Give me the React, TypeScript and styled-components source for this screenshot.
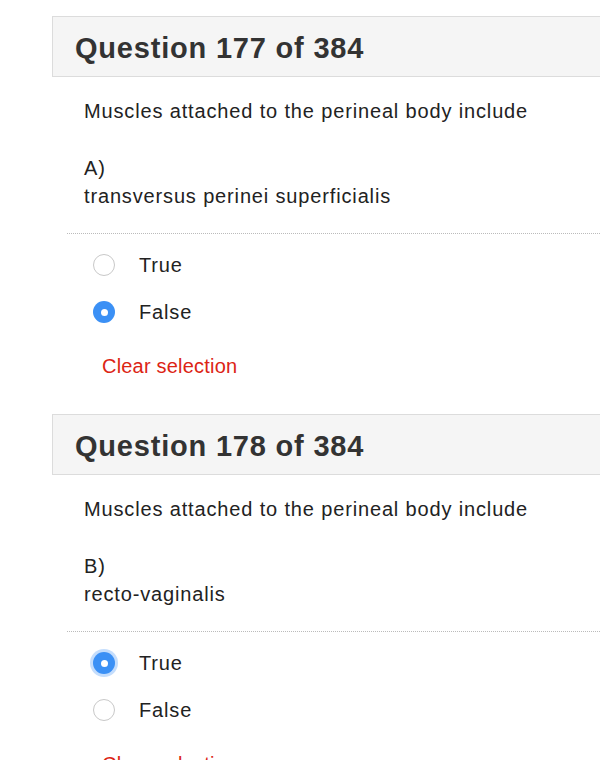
import React from "react";
import styled, { createGlobalStyle } from "styled-components";

const Global = createGlobalStyle`
  html, body { margin: 0; padding: 0; background: #fff; }
  body { font-family: "Liberation Sans", Arial, sans-serif; color: #333; overflow: hidden; }
`;

const Page = styled.div`
  width: 600px;
  height: 760px;
  overflow: hidden;
  padding: 16px 0 0 52px;
  box-sizing: border-box;
`;

const Question = styled.section`
  display: flex;
  flex-direction: column;
  margin-bottom: 36px;
`;

const Header = styled.div`
  width: 600px;
  height: 61px;
  box-sizing: border-box;
  border: 1px solid #dcdcdc;
  background: #f5f5f5;
  display: flex;
  align-items: center;
  padding: 3px 0 0 22px;
`;

const Title = styled.h2`
  margin: 0;
  font-size: 29px;
  font-weight: bold;
  letter-spacing: 0.8px;
  color: #333;
`;

const Body = styled.div`
  padding: 20px 0 0 0;
`;

const Text = styled.p`
  margin: 0 0 0 32px;
  font-size: 20px;
  letter-spacing: 0.85px;
  line-height: 28px;
  color: #222;
`;

const Stem = styled(Text)`
  margin-bottom: 29px;
`;

const Divider = styled.div`
  margin: 23px 0 0 15px;
  border-top: 1px dotted #bbb;
`;

const Options = styled.div`
  display: flex;
  flex-direction: column;
  gap: 25px;
  padding: 20px 0 0 41px;
`;

const Option = styled.label`
  display: flex;
  align-items: center;
  gap: 24px;
  font-size: 20px;
  letter-spacing: 0.85px;
  color: #222;
  height: 22px;
`;

const Radio = styled.span<{ $checked?: boolean; $focus?: boolean }>`
  width: 22px;
  height: 22px;
  box-sizing: border-box;
  border-radius: 50%;
  flex: none;
  display: flex;
  align-items: center;
  justify-content: center;
  border: ${(p) => (p.$checked ? "none" : "1px solid #c8c8c8")};
  background: ${(p) => (p.$checked ? "#3b90f5" : "#fff")};
  box-shadow: ${(p) => (p.$focus ? "0 0 0 3px rgba(59,144,245,0.3)" : "none")};
  &::after {
    content: "";
    display: ${(p) => (p.$checked ? "block" : "none")};
    width: 7px;
    height: 7px;
    border-radius: 50%;
    background: #fff;
  }
`;

const Clear = styled.a`
  display: block;
  margin: 31px 0 0 50px;
  font-size: 20px;
  letter-spacing: 0.2px;
  line-height: 24px;
  color: #dc2414;
  text-decoration: none;
`;

type Q = { n: number; letter: string; text: string; answer: boolean; focus?: boolean };

const questions: Q[] = [
  { n: 177, letter: "A)", text: "transversus perinei superficialis", answer: false },
  { n: 178, letter: "B)", text: "recto-vaginalis", answer: true, focus: true },
];

export default function App() {
  return (
    <Page>
      <Global />
      {questions.map((q) => (
        <Question key={q.n}>
          <Header>
            <Title>Question {q.n} of 384</Title>
          </Header>
          <Body>
            <Stem>Muscles attached to the perineal body include</Stem>
            <Text>{q.letter}</Text>
            <Text>{q.text}</Text>
            <Divider />
            <Options>
              <Option>
                <Radio $checked={q.answer} $focus={q.answer && q.focus} />
                True
              </Option>
              <Option>
                <Radio $checked={!q.answer} $focus={!q.answer && q.focus} />
                False
              </Option>
            </Options>
            <Clear href="#">Clear selection</Clear>
          </Body>
        </Question>
      ))}
    </Page>
  );
}
